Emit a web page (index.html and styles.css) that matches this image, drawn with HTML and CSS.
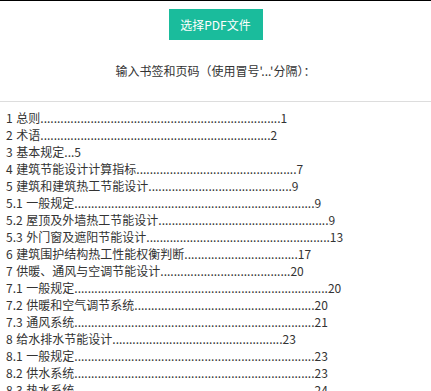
FILE: index.html
```html
<!DOCTYPE html>
<html>
<head>
    <title>PDF书签</title>
    <link rel="stylesheet" href="styles.css">
</head>
<body>
    <div class="page">
        <!-- 选择文件 -->
        <div class="file-row">
            <label class="file-btn" for="pdfFile">选择PDF文件</label>
            <input type="file" id="pdfFile" accept=".pdf">
        </div>

        <p class="hint">输入书签和页码（使用冒号'...'分隔）：</p>

        <!-- 书签输入 -->
        <textarea class="bookmarks" id="bookmarks" spellcheck="false">1 总则........................................................................1
2 术语.....................................................................2
3 基本规定...5
4 建筑节能设计计算指标................................................7
5 建筑和建筑热工节能设计...........................................9
5.1 一般规定........................................................................9
5.2 屋顶及外墙热工节能设计...................................................9
5.3 外门窗及遮阳节能设计.......................................................13
6 建筑围护结构热工性能权衡判断..................................17
7 供暖、通风与空调节能设计.......................................20
7.1 一般规定............................................................................20
7.2 供暖和空气调节系统......................................................20
7.3 通风系统........................................................................21
8 给水排水节能设计...................................................23
8.1 一般规定........................................................................23
8.2 供水系统........................................................................23
8.3 热水系统........................................................................24</textarea>
    </div>
</body>
</html>
```

FILE: styles.css
```css
body {
    margin: 0;
    border-top: 1px solid #000;
    font-family: "Noto Sans CJK SC", "Noto Sans", sans-serif;
    font-size: 12px;
    color: #333;
    background: #fff;
    overflow: hidden;
}

.page {
    display: flex;
    flex-direction: column;
    align-items: center;
}

.file-row {
    padding-top: 8px;
}

.file-row input {
    display: none;
}

.file-btn {
    display: inline-block;
    width: 94px;
    height: 31px;
    line-height: 31px;
    text-align: center;
    background: #1abc9c;
    color: #fff;
    font-size: 12px;
    cursor: pointer;
}

.hint {
    margin: 22px 0 0;
    height: 17px;
    line-height: 17px;
    font-size: 12px;
    color: #333;
}

.bookmarks {
    box-sizing: border-box;
    width: 100%;
    height: 320px;
    margin-top: 22px;
    padding: 7px 6px;
    border: 1px solid #ddd;
    border-left: none;
    border-right: none;
    font-family: "Noto Sans CJK SC", "Noto Sans", sans-serif;
    font-size: 12px;
    line-height: 17px;
    word-spacing: 1px;
    color: #333;
    resize: none;
    outline: none;
    white-space: pre;
    overflow: hidden;
}
```
